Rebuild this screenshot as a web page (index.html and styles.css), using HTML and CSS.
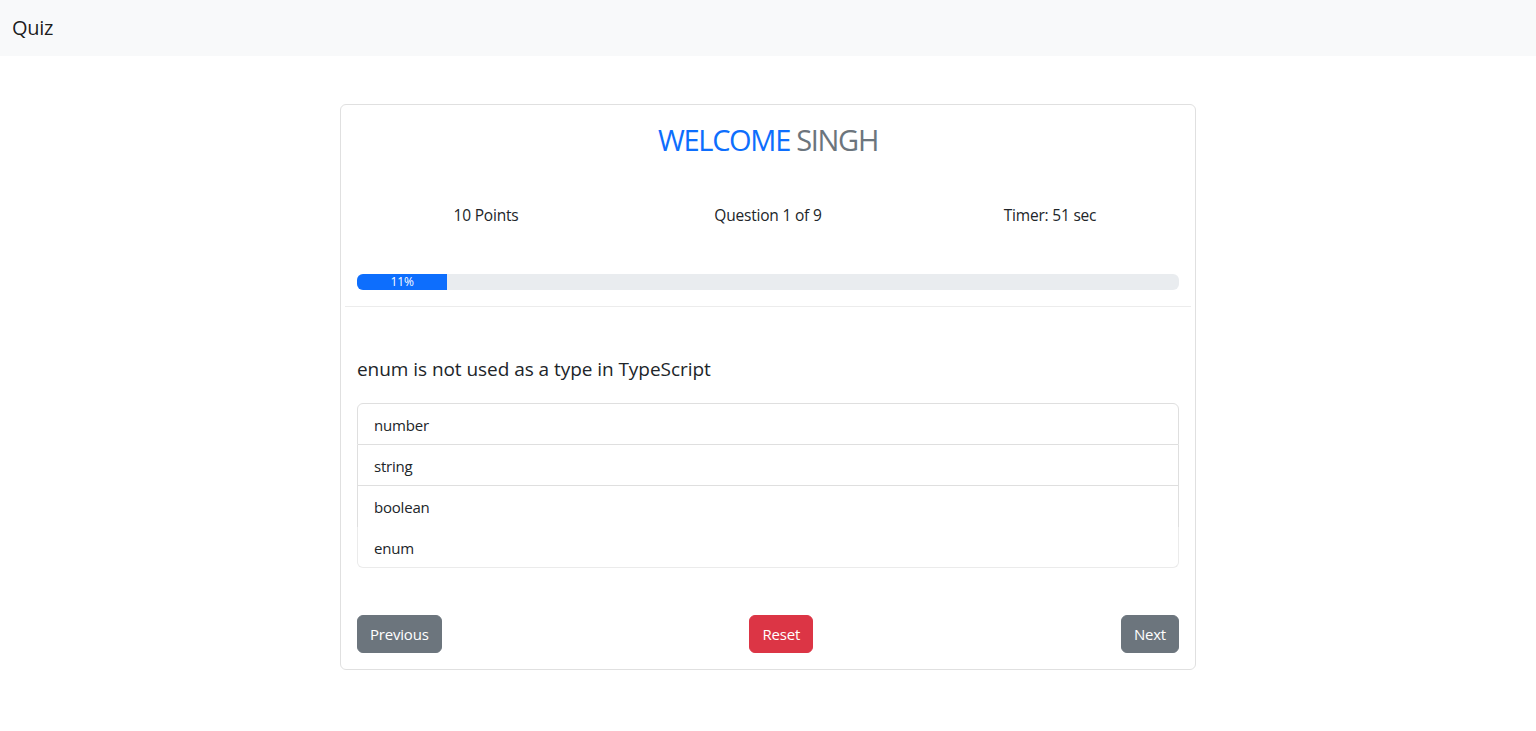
FILE: index.html
```html
<!DOCTYPE html>
<html lang="en">
<head>
<meta charset="utf-8">
<title>Quiz</title>
<link rel="stylesheet" href="styles.css">
</head>
<body>
<nav class="navbar">
  <span class="brand">Quiz</span>
</nav>
<main class="page">
  <section class="card">
    <div class="card-head">
      <h2 class="title"><span class="title-main">WELCOME</span> <span class="title-name">SINGH</span></h2>
      <div class="stats">
        <div class="stat">10 Points</div>
        <div class="stat">Question 1 of 9</div>
        <div class="stat">Timer: 51 sec</div>
      </div>
      <div class="progress">
        <div class="progress-bar" style="width: 11%">11%</div>
      </div>
    </div>
    <hr class="divider">
    <div class="card-body">
      <h5 class="question">enum is not used as a type in TypeScript</h5>
      <ul class="options">
        <li class="option">number</li>
        <li class="option">string</li>
        <li class="option option-hover">boolean</li>
        <li class="option option-last">enum</li>
      </ul>
      <div class="actions">
        <button class="btn btn-secondary">Previous</button>
        <button class="btn btn-danger">Reset</button>
        <button class="btn btn-secondary">Next</button>
      </div>
    </div>
  </section>
</main>
</body>
</html>
```

FILE: styles.css
```css
* { box-sizing: border-box; }
html, body { margin: 0; padding: 0; }
body {
  font-family: "Open Sans", "Noto Sans", sans-serif;
  font-size: 16px;
  line-height: 1.5;
  color: #212529;
  background: #fff;
}
.navbar {
  height: 56px;
  background: #f8f9fa;
  display: flex;
  align-items: center;
  padding: 0 12px;
}
.brand {
  font-size: 20px;
  line-height: 30px;
  color: rgba(0,0,0,.9);
  letter-spacing: -0.3px;
}
.page {
  display: flex;
  justify-content: center;
  padding-top: 48px;
}
.card {
  width: 856px;
  border: 1px solid #e0e0e0;
  border-radius: 6px;
  padding: 4px 4px 16px;
}
.card-head {
  padding-top: 12px;
}
.title {
  margin: 0;
  text-align: center;
  font-size: 29px;
  font-weight: 400;
  line-height: 38px;
  letter-spacing: -1.3px;
}
.title-main { color: #0d6efd; }
.title-name { color: #6c757d; }
.stats {
  display: grid;
  grid-template-columns: repeat(3, 1fr);
  margin-top: 44px;
  text-align: center;
}
.stat {
  font-size: 15.5px;
  line-height: 24px;
  letter-spacing: -0.2px;
}
.progress {
  margin: 47px 12px 0;
  height: 16px;
  background: #e9ecef;
  border-radius: 6px;
  overflow: hidden;
  display: flex;
}
.progress-bar {
  background: #0d6efd;
  color: #fff;
  font-size: 12px;
  line-height: 16px;
  text-align: center;
}
.divider {
  margin: 16px 0 0;
  border: 0;
  border-top: 1px solid #ececec;
}
.card-body {
  padding: 0 12px;
}
.question {
  margin: 50px 0 0;
  font-size: 19px;
  font-weight: 400;
  line-height: 24px;
  letter-spacing: -0.05px;
}
.options {
  list-style: none;
  margin: 22px 0 0;
  padding: 0;
  border-radius: 6px;
}
.option {
  padding: 9px 16px 7px;
  font-size: 15px;
  line-height: 24px;
  letter-spacing: -0.2px;
  border: 1px solid #dfdfdf;
  border-top: 0;
}
.option:first-child {
  border-top: 1px solid #dfdfdf;
  border-radius: 6px 6px 0 0;
  height: 42px;
}
.option-hover {
  border-bottom: 0;
  height: 41px;
}
.option-last {
  border-color: #ebebeb;
  border-radius: 0 0 6px 6px;
  height: 41px;
}
.actions {
  display: flex;
  justify-content: space-between;
  margin-top: 47px;
}
.btn {
  font-family: inherit;
  font-size: 15px;
  line-height: 24px;
  letter-spacing: -0.2px;
  padding: 6px 12px;
  border: 1px solid transparent;
  border-radius: 6px;
  color: #fff;
  height: 38px;
}
.btn-secondary { background: #6c757d; border-color: #6c757d; }
.btn-danger { background: #dc3545; border-color: #dc3545; }
```
